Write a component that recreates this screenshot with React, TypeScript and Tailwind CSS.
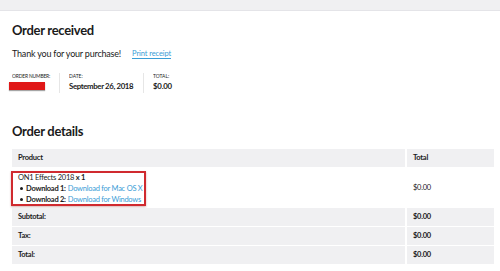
export default function App() {
  const rows = [
    { label: "Subtotal:", value: "$0.00" },
    { label: "Tax:", value: "$0.00" },
    { label: "Total:", value: "$0.00" },
  ];

  return (
    <div className="w-[500px] h-[271px] overflow-hidden bg-white text-[#1b1b1b]" style={{ fontFamily: "Lato, 'Noto Sans', sans-serif" }}>
      <div className="h-[11px] bg-[#f0f0f2] border-b border-[#e4e4e8]" />

      <div className="pl-[12px] pr-[6px]">
        <h1 className="mt-[11px] text-[13px] leading-[16px] font-bold tracking-[-0.3px]">Order received</h1>

        <div className="mt-[10px] flex items-center h-[12px] whitespace-nowrap">
          <span className="text-[9px] tracking-[-0.2px]">Thank you for your purchase!</span>
          <span className="ml-[11px] text-[7.5px] leading-[9px] text-[#3a9dd6] border-b border-[#3a9dd6] tracking-[-0.1px]">Print receipt</span>
        </div>

        <div className="mt-[13px] flex whitespace-nowrap">
          <div className="w-[48px] border-r border-[#e6e6e6] flex flex-col h-[20px]">
            <span className="text-[6px] leading-[6px] uppercase scale-x-[0.82] origin-left tracking-[-0.2px]">Order number:</span>
            <span className="mt-[3px] -ml-[3px] h-[8px] w-[36px] bg-[#e01818] shadow-[0_1px_1px_rgba(0,0,0,0.35)]" />
          </div>
          <div className="w-[84px] pl-[9px] border-r border-[#e6e6e6] flex flex-col h-[20px]">
            <span className="text-[6px] leading-[6px] uppercase scale-x-[0.82] origin-left">Date:</span>
            <span className="mt-[2px] text-[7.8px] leading-[10px] font-bold tracking-[-0.35px]">September 26, 2018</span>
          </div>
          <div className="pl-[9px] flex flex-col">
            <span className="text-[6px] leading-[6px] uppercase scale-x-[0.82] origin-left">Total:</span>
            <span className="mt-[2px] text-[7.8px] leading-[10px] font-bold tracking-[-0.2px]">$0.00</span>
          </div>
        </div>

        <h2 className="mt-[30px] text-[13px] leading-[16px] font-bold tracking-[-0.3px]">Order details</h2>

        <div className="mt-[10px] flex flex-col gap-[1px] w-[482px] text-[7.5px] tracking-[-0.25px] whitespace-nowrap">
          <div className="flex gap-[2px] h-[18px]">
            <div className="flex-1 bg-[#f0f0f2] flex items-center px-[6px] font-bold">Product</div>
            <div className="w-[87px] bg-[#f0f0f2] flex items-center px-[6px] font-bold">Total</div>
          </div>
          <div className="flex gap-[2px] h-[39px]">
            <div className="flex-1 pt-[3px]">
              <div className="-ml-[1px] w-[135px] h-[35px] border-2 border-[#d02a2f] shadow-[0_1px_2px_rgba(120,0,0,0.3)] pl-[5px] flex flex-col justify-center leading-[11px]">
                <span>ON1 Effects 2018 <b>x 1</b></span>
                <span className="flex items-center">
                  <span className="ml-[2px] w-[3px] h-[3px] rounded-full bg-[#1b1b1b]" />
                  <b className="ml-[3px]">Download 1:</b>
                  <span className="ml-[2px] text-[#3a9dd6]">Download for Mac OS X</span>
                </span>
                <span className="flex items-center">
                  <span className="ml-[2px] w-[3px] h-[3px] rounded-full bg-[#1b1b1b]" />
                  <b className="ml-[3px]">Download 2:</b>
                  <span className="ml-[2px] text-[#3a9dd6]">Download for Windows</span>
                </span>
              </div>
            </div>
            <div className="w-[87px] flex items-center px-[6px]">$0.00</div>
          </div>
          {rows.map((r) => (
            <div key={r.label} className="flex gap-[2px] h-[18px]">
              <div className="flex-1 bg-[#f0f0f2] flex items-center px-[6px] font-bold">{r.label}</div>
              <div className="w-[87px] bg-[#f0f0f2] flex items-center px-[6px] font-bold">{r.value}</div>
            </div>
          ))}
        </div>
      </div>
    </div>
  );
}
